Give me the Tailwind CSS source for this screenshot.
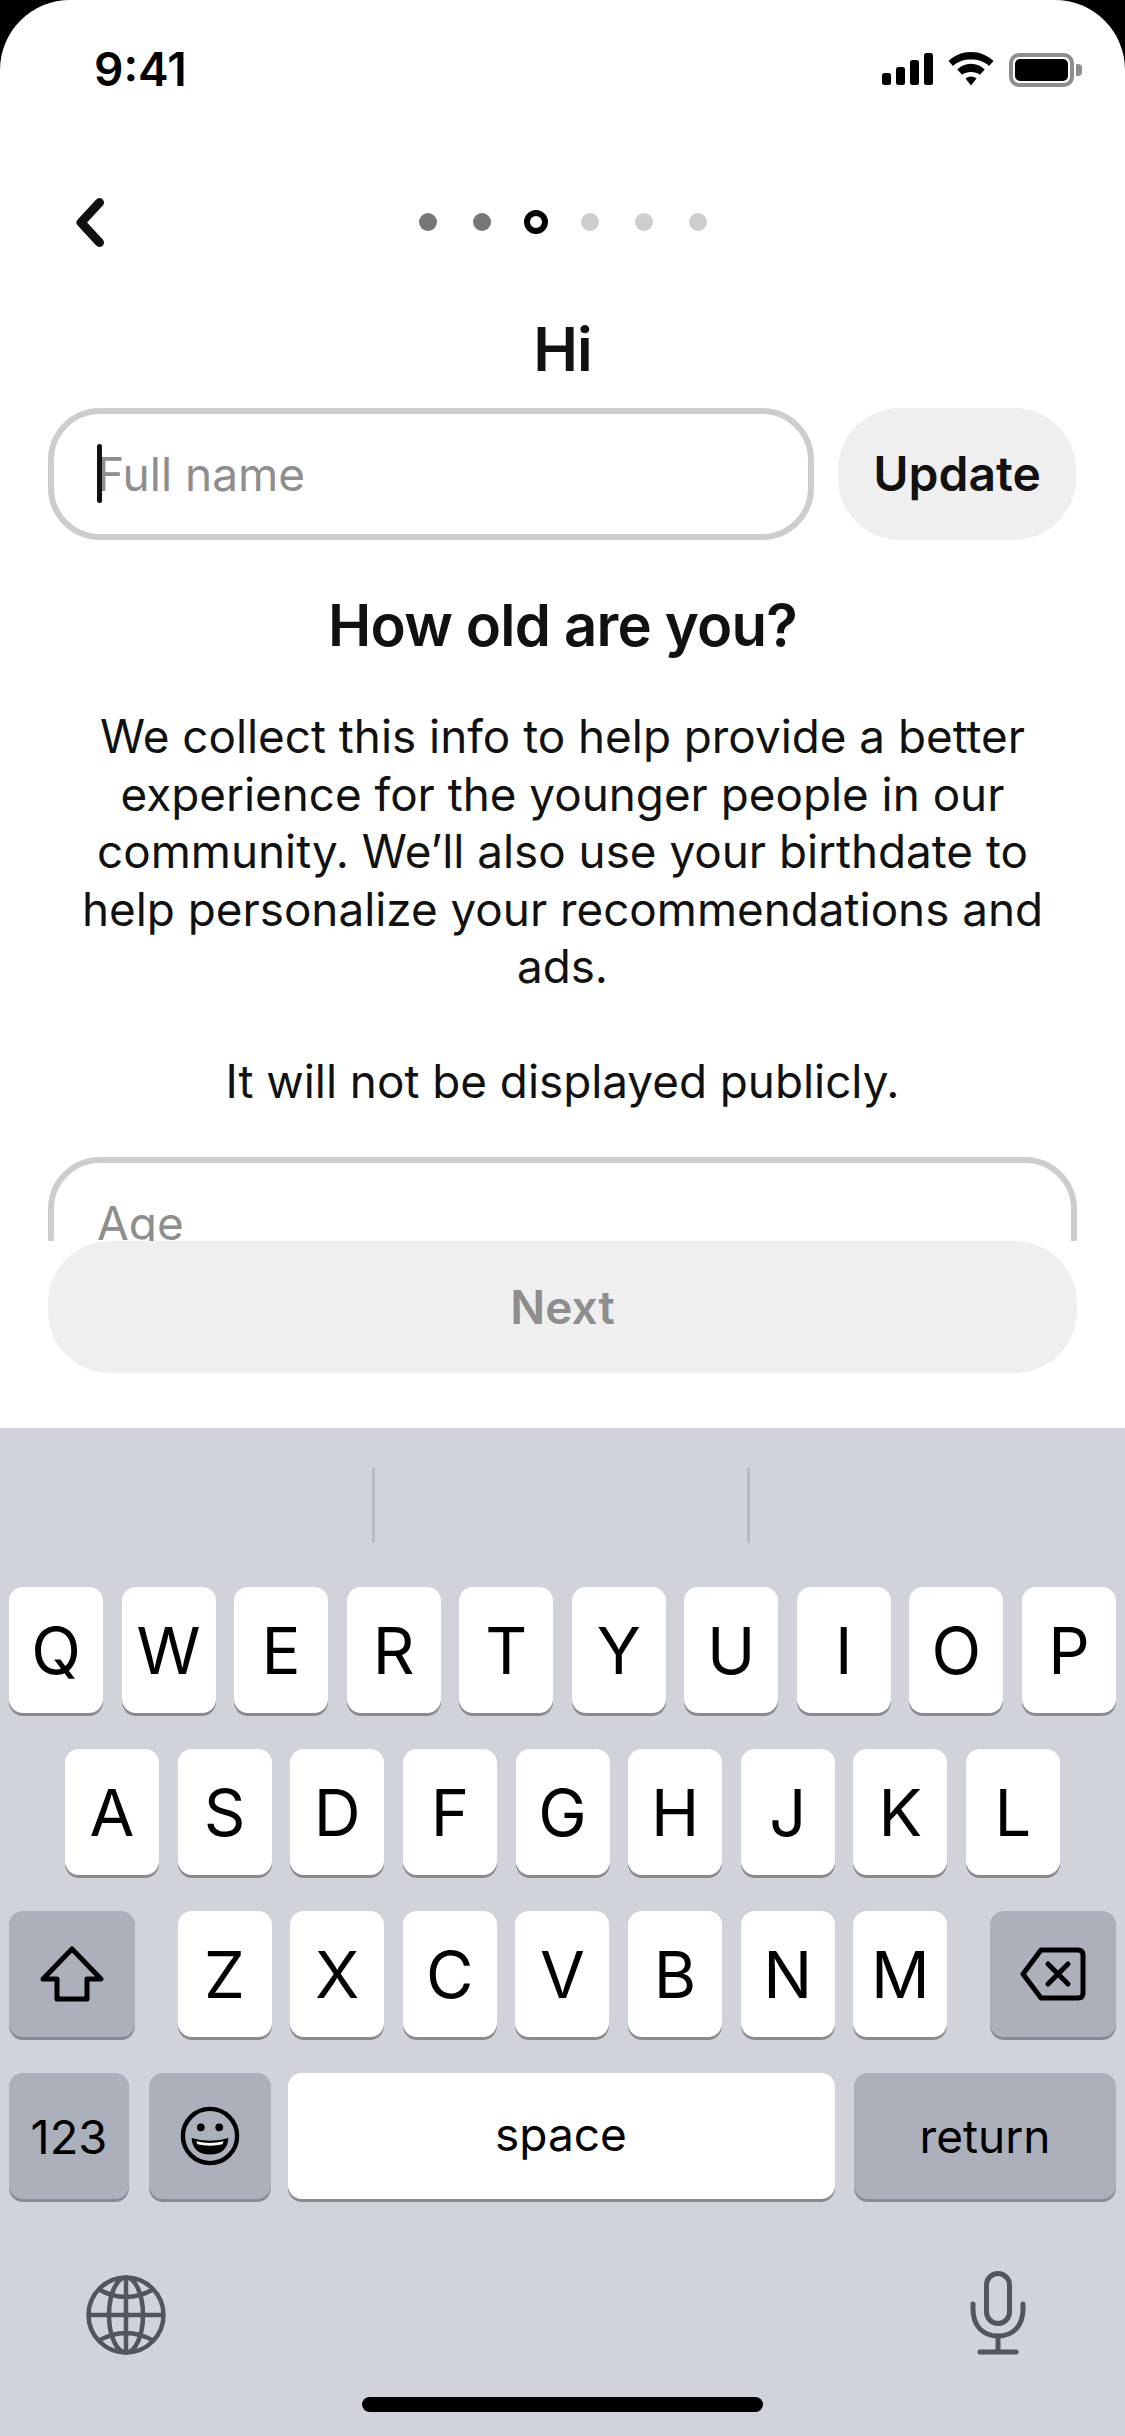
<!DOCTYPE html>
<html lang="en">
<head>
    <meta charset="UTF-8">
    <meta name="viewport" content="width=device-width, initial-scale=1.0">
    <title>Age step</title>
    <script src="https://cdn.jsdelivr.net/npm/@tailwindcss/browser@4"></script>
</head>
<body class="bg-black">
    <div class="relative w-[1125px] h-[2436px] overflow-hidden bg-white rounded-t-[70px] font-['Inter','Liberation_Sans',sans-serif] text-[#111111] flex flex-col">
        <!-- Status bar -->
        <div class="h-[180px] shrink-0 flex justify-between items-start pt-[42px] pl-[94px] pr-[43px]">
            <span class="text-[46px] leading-[54px] font-semibold text-black">9:41</span>
            <div class="flex items-start gap-[15px] pt-[10px]">
                <svg class="mt-[1px]" width="51" height="32" viewBox="0 0 51 32" fill="#000">
                    <rect x="0" y="20" width="9" height="12" rx="2.500"/>
                    <rect x="14" y="14" width="9" height="18" rx="2.500"/>
                    <rect x="28" y="7" width="9" height="25" rx="2.500"/>
                    <rect x="42" y="0" width="9" height="32" rx="2.500"/>
                </svg>
                <svg width="46" height="34" viewBox="0 0 46 34" fill="#000">
                    <path d="M23 0C14 0 6.500 3.400 0.500 9L5 14C10 9.500 16 7.600 23 7.600S36 9.500 41 14L45.500 9C39.500 3.400 32 0 23 0Z"/>
                    <path d="M23 11.800C17.500 11.800 13 14 9.300 17.500L14 22.800C16.500 20.800 19.500 20 23 20S29.500 20.800 32 22.800L36.700 17.500C33 14 28.500 11.800 23 11.800Z"/>
                    <path d="M23 24.500C20.800 24.500 19 25.300 17.500 26.500L23 33.500L28.500 26.500C27 25.300 25.200 24.500 23 24.500Z"/>
                </svg>
                <div class="flex items-center gap-[2px] mt-[1px]">
                    <div class="w-[65px] h-[34px] rounded-[10px] border-[4px] border-[#8e8e8e] p-[2px]">
                        <div class="w-full h-full bg-black rounded-[5px]"></div>
                    </div>
                    <div class="w-[6px] h-[12px] bg-[#8e8e8e] rounded-r-[4px]"></div>
                </div>
            </div>
        </div>

        <!-- Back + step dots -->
        <div class="relative h-[84px] shrink-0 flex items-center justify-center">
            <svg class="absolute left-[71px] top-[17px]" width="36" height="52" viewBox="0 0 36 52" fill="none" stroke="#111111" stroke-width="9" stroke-linecap="round" stroke-linejoin="round">
                <path d="M28.500 5.500L10 25.500L28.500 45.500" />
            </svg>
            <div class="flex items-center gap-[36px] ml-[1px]">
                <div class="w-[18px] h-[18px] rounded-full bg-[#767676]"></div>
                <div class="w-[18px] h-[18px] rounded-full bg-[#767676]"></div>
                <div class="w-[24px] h-[24px] -mx-[3px] rounded-full border-[6px] border-black bg-white"></div>
                <div class="w-[18px] h-[18px] rounded-full bg-[#cdcdcd]"></div>
                <div class="w-[18px] h-[18px] rounded-full bg-[#cdcdcd]"></div>
                <div class="w-[18px] h-[18px] rounded-full bg-[#cdcdcd]"></div>
            </div>
        </div>

        <!-- Name -->
        <h1 class="mt-[49px] text-center text-[60px] leading-[72px] font-semibold tracking-[-1px]">Hi</h1>
        <div class="mt-[23px] px-[48px] flex gap-[24px]">
            <div class="relative w-[766px] h-[132px] rounded-[52px] border-[6px] border-[#cdcdcd] flex items-center pl-[43px] text-[46px] text-[#8e8e8e]">
                <span>Full name</span>
                <div class="absolute left-[43px] top-[30px] w-[5px] h-[59px] rounded-full bg-[#111111]"></div>
            </div>
            <div class="w-[238px] h-[132px] rounded-[62px] bg-[#efefef] flex items-center justify-center text-[48px] font-semibold">Update</div>
        </div>

        <!-- Age explanation -->
        <h2 class="mt-[49px] text-center text-[58px] leading-[72px] font-semibold tracking-[-0.8px]">How old are you?</h2>
        <div class="mt-[47px] text-center text-[45.8px] leading-[57.5px] text-[#111111]">
            <p>We collect this info to help provide a better<br>experience for the younger people in our<br>community. We’ll also use your birthdate to<br>help personalize your recommendations and<br>ads.</p>
            <p class="mt-[57px]">It will not be displayed publicly.</p>
        </div>

        <!-- Age input, cut off by the Next button -->
        <div class="mt-[47px] mx-[48px] h-[84px] overflow-hidden shrink-0">
            <div class="h-[132px] rounded-[52px] border-[6px] border-[#cdcdcd] flex items-center pl-[43px] text-[46px] text-[#8e8e8e]">Age</div>
        </div>
        <div class="mx-[48px] h-[132px] shrink-0 rounded-[62px] bg-[#efefef] flex items-center justify-center text-[46px] font-semibold text-[#8e8e8e]">Next</div>

        <!-- Keyboard -->
        <div class="absolute left-0 right-0 top-[1428px] bottom-0 bg-[#d0d3da] text-black">
            <div class="h-[159px] flex pt-[39px] pl-[372px] gap-[372px]">
                <div class="w-[3px] h-[76px] rounded-full bg-[#b8bbc4]"></div>
                <div class="w-[3px] h-[76px] rounded-full bg-[#b8bbc4]"></div>
            </div>
            <div class="flex flex-col gap-[36px] px-[9px] text-[65px] leading-none">
                <div class="flex justify-between">
                    <div class="w-[94px] h-[126px] rounded-[14px] bg-white shadow-[0_3px_0_#8a8b8f] flex items-center justify-center">Q</div>
                    <div class="w-[94px] h-[126px] rounded-[14px] bg-white shadow-[0_3px_0_#8a8b8f] flex items-center justify-center">W</div>
                    <div class="w-[94px] h-[126px] rounded-[14px] bg-white shadow-[0_3px_0_#8a8b8f] flex items-center justify-center">E</div>
                    <div class="w-[94px] h-[126px] rounded-[14px] bg-white shadow-[0_3px_0_#8a8b8f] flex items-center justify-center">R</div>
                    <div class="w-[94px] h-[126px] rounded-[14px] bg-white shadow-[0_3px_0_#8a8b8f] flex items-center justify-center">T</div>
                    <div class="w-[94px] h-[126px] rounded-[14px] bg-white shadow-[0_3px_0_#8a8b8f] flex items-center justify-center">Y</div>
                    <div class="w-[94px] h-[126px] rounded-[14px] bg-white shadow-[0_3px_0_#8a8b8f] flex items-center justify-center">U</div>
                    <div class="w-[94px] h-[126px] rounded-[14px] bg-white shadow-[0_3px_0_#8a8b8f] flex items-center justify-center">I</div>
                    <div class="w-[94px] h-[126px] rounded-[14px] bg-white shadow-[0_3px_0_#8a8b8f] flex items-center justify-center">O</div>
                    <div class="w-[94px] h-[126px] rounded-[14px] bg-white shadow-[0_3px_0_#8a8b8f] flex items-center justify-center">P</div>
                </div>
                <div class="flex justify-between px-[56px]">
                    <div class="w-[94px] h-[126px] rounded-[14px] bg-white shadow-[0_3px_0_#8a8b8f] flex items-center justify-center">A</div>
                    <div class="w-[94px] h-[126px] rounded-[14px] bg-white shadow-[0_3px_0_#8a8b8f] flex items-center justify-center">S</div>
                    <div class="w-[94px] h-[126px] rounded-[14px] bg-white shadow-[0_3px_0_#8a8b8f] flex items-center justify-center">D</div>
                    <div class="w-[94px] h-[126px] rounded-[14px] bg-white shadow-[0_3px_0_#8a8b8f] flex items-center justify-center">F</div>
                    <div class="w-[94px] h-[126px] rounded-[14px] bg-white shadow-[0_3px_0_#8a8b8f] flex items-center justify-center">G</div>
                    <div class="w-[94px] h-[126px] rounded-[14px] bg-white shadow-[0_3px_0_#8a8b8f] flex items-center justify-center">H</div>
                    <div class="w-[94px] h-[126px] rounded-[14px] bg-white shadow-[0_3px_0_#8a8b8f] flex items-center justify-center">J</div>
                    <div class="w-[94px] h-[126px] rounded-[14px] bg-white shadow-[0_3px_0_#8a8b8f] flex items-center justify-center">K</div>
                    <div class="w-[94px] h-[126px] rounded-[14px] bg-white shadow-[0_3px_0_#8a8b8f] flex items-center justify-center">L</div>
                </div>
                <div class="flex justify-between">
                    <div class="w-[126px] h-[126px] rounded-[14px] bg-[#abb0bb] shadow-[0_3px_0_#8a8b8f] flex items-center justify-center">
                        <svg width="64" height="56" viewBox="0 0 64 56" fill="none" stroke="#000" stroke-width="5" stroke-linejoin="round">
                            <path d="M32 3L61 33H47V53H17V33H3Z"/>
                        </svg>
                    </div>
                    <div class="flex justify-between w-[770px]">
                        <div class="w-[94px] h-[126px] rounded-[14px] bg-white shadow-[0_3px_0_#8a8b8f] flex items-center justify-center">Z</div>
                        <div class="w-[94px] h-[126px] rounded-[14px] bg-white shadow-[0_3px_0_#8a8b8f] flex items-center justify-center">X</div>
                        <div class="w-[94px] h-[126px] rounded-[14px] bg-white shadow-[0_3px_0_#8a8b8f] flex items-center justify-center">C</div>
                        <div class="w-[94px] h-[126px] rounded-[14px] bg-white shadow-[0_3px_0_#8a8b8f] flex items-center justify-center">V</div>
                        <div class="w-[94px] h-[126px] rounded-[14px] bg-white shadow-[0_3px_0_#8a8b8f] flex items-center justify-center">B</div>
                        <div class="w-[94px] h-[126px] rounded-[14px] bg-white shadow-[0_3px_0_#8a8b8f] flex items-center justify-center">N</div>
                        <div class="w-[94px] h-[126px] rounded-[14px] bg-white shadow-[0_3px_0_#8a8b8f] flex items-center justify-center">M</div>
                    </div>
                    <div class="w-[126px] h-[126px] rounded-[14px] bg-[#abb0bb] shadow-[0_3px_0_#8a8b8f] flex items-center justify-center">
                        <svg width="66" height="54" viewBox="0 0 66 54" fill="none" stroke="#000" stroke-width="5" stroke-linecap="round" stroke-linejoin="round">
                            <path d="M21 3H58Q63 3 63 8V46Q63 51 58 51H21L3 27Z"/>
                            <path d="M28 17L48 37M48 17L28 37"/>
                        </svg>
                    </div>
                </div>
                <div class="flex justify-between text-[46px]">
                    <div class="flex gap-[20px]">
                        <div class="w-[120px] h-[126px] rounded-[14px] bg-[#abb0bb] shadow-[0_3px_0_#8a8b8f] flex items-center justify-center text-[47px]">123</div>
                        <div class="w-[122px] h-[126px] rounded-[14px] bg-[#abb0bb] shadow-[0_3px_0_#8a8b8f] flex items-center justify-center">
                            <svg width="60" height="60" viewBox="0 0 62 62">
                                <circle cx="31" cy="31" r="28" fill="none" stroke="#000" stroke-width="4.500"/>
                                <circle cx="21.500" cy="22" r="4"/>
                                <circle cx="40.500" cy="22" r="4"/>
                                <path d="M12 33Q31 39 50 33Q49 50 31 50Q13 50 12 33Z"/>
                                <path d="M17 36.500Q31 40 45 36.500L44 39.500Q31 42.500 18 39.500Z" fill="#fff"/>
                            </svg>
                        </div>
                    </div>
                    <div class="w-[547px] h-[126px] pb-[5px] rounded-[14px] bg-white shadow-[0_3px_0_#8a8b8f] flex items-center justify-center -ml-[3px]">space</div>
                    <div class="w-[262px] h-[126px] rounded-[14px] bg-[#abb0bb] shadow-[0_3px_0_#8a8b8f] flex items-center justify-center">return</div>
                </div>
            </div>
            <div class="flex justify-between pl-[86px] pr-[99px] mt-[76px] items-start">
                <svg width="80" height="80" viewBox="0 0 80 80" fill="none" stroke="#50555e" stroke-width="4.500">
                    <circle cx="40" cy="40" r="37.500"/>
                    <ellipse cx="40" cy="40" rx="17" ry="37.500"/>
                    <path d="M40 2.500V77.500M2.500 40H77.500M12 14Q40 30 68 14M12 66Q40 50 68 66"/>
                </svg>
                <svg class="-mt-[4px]" width="56" height="84" viewBox="0 0 56 84" fill="none" stroke="#50555e" stroke-width="5" stroke-linecap="round">
                    <rect x="16.500" y="2.500" width="23" height="50" rx="11.500"/>
                    <path d="M3 33V38C3 55 13 65 28 65S53 55 53 38V33"/>
                    <path d="M28 65V81M10 81H46"/>
                </svg>
            </div>
            <div class="absolute left-[362px] bottom-[24px] w-[401px] h-[15px] rounded-full bg-black"></div>
        </div>
    </div>
</body>
</html>
